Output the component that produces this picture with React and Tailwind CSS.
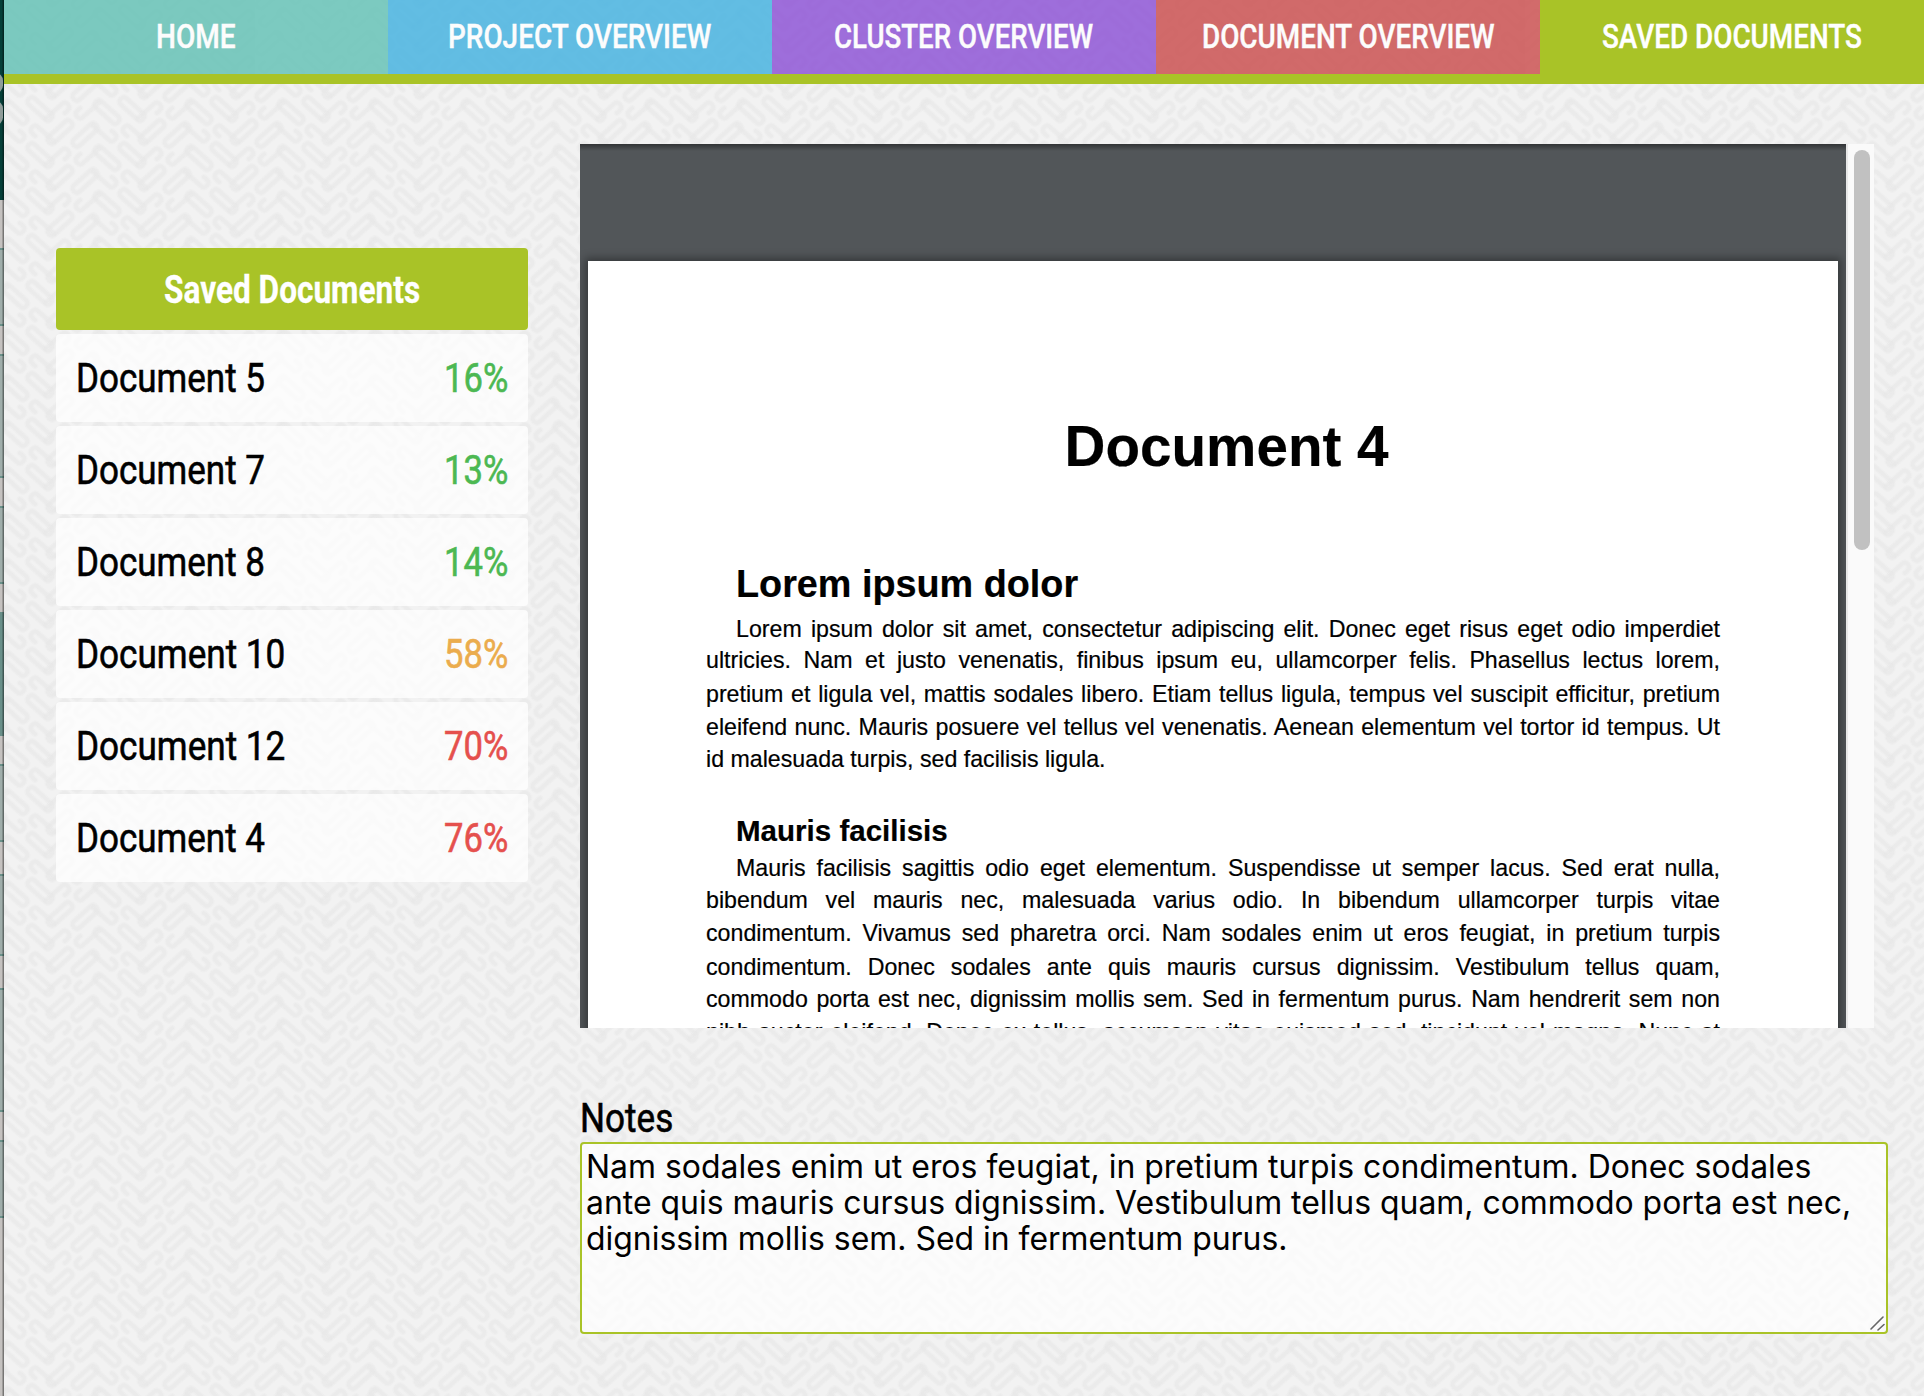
import { useLayoutEffect, useRef, useState } from "react";

// Condenses or widens a single line of text so that it takes `width` pixels.
function Fit({ width, origin = "left", className = "", children }) {
  const ref = useRef(null);
  const [scale, setScale] = useState(1);
  useLayoutEffect(() => {
    const w = ref.current.offsetWidth;
    if (w) setScale(width / w);
  }, [width]);
  const justify = origin === "center" ? "justify-center" : origin === "right" ? "justify-end" : "justify-start";
  return (
    <span className={`flex whitespace-nowrap ${justify} ${className}`} style={{ width }}>
      <span
        ref={ref}
        className="inline-block shrink-0"
        style={{ transform: `scaleX(${scale})`, transformOrigin: `${origin} center` }}
      >
        {children}
      </span>
    </span>
  );
}

const TABS = [
  { label: "HOME", width: 80, color: "bg-[#67c3b7] opacity-85" },
  { label: "PROJECT OVERVIEW", width: 263, color: "bg-[#49b4e1] opacity-85" },
  { label: "CLUSTER OVERVIEW", width: 259, color: "bg-[#9057d7] opacity-85" },
  { label: "DOCUMENT OVERVIEW", width: 293, color: "bg-[#cc5353] opacity-85" },
  { label: "SAVED DOCUMENTS", width: 260, color: "bg-[#a9c327]" },
];

const DOCS = [
  { name: "Document 5", width: 189, score: "16%", color: "text-[#4cb852]" },
  { name: "Document 7", width: 189, score: "13%", color: "text-[#4cb852]" },
  { name: "Document 8", width: 189, score: "14%", color: "text-[#4cb852]" },
  { name: "Document 10", width: 209, score: "58%", color: "text-[#ebac4d]" },
  { name: "Document 12", width: 209, score: "70%", color: "text-[#e5504d]" },
  { name: "Document 4", width: 189, score: "76%", color: "text-[#e5504d]" },
];

const INTRO = [
  ["Lorem ipsum dolor sit amet, consectetur adipiscing elit. Donec eget risus eget odio imperdiet", "h-[31px] pl-[30px]"],
  ["ultricies. Nam et justo venenatis, finibus ipsum eu, ullamcorper felis. Phasellus lectus lorem,", "h-[34px]"],
  ["pretium et ligula vel, mattis sodales libero. Etiam tellus ligula, tempus vel suscipit efficitur, pretium", "h-[33px]"],
  ["eleifend nunc. Mauris posuere vel tellus vel venenatis. Aenean elementum vel tortor id tempus. Ut", "h-8"],
];

const MAURIS = [
  ["Mauris facilisis sagittis odio eget elementum. Suspendisse ut semper lacus. Sed erat nulla,", "h-8 pl-[30px]"],
  ["bibendum vel mauris nec, malesuada varius odio. In bibendum ullamcorper turpis vitae", "h-[33px]"],
  ["condimentum. Vivamus sed pharetra orci. Nam sodales enim ut eros feugiat, in pretium turpis", "h-[34px]"],
  ["condimentum. Donec sodales ante quis mauris cursus dignissim. Vestibulum tellus quam,", "h-8"],
  ["commodo porta est nec, dignissim mollis sem. Sed in fermentum purus. Nam hendrerit sem non", "h-[33px]"],
  ["nibh auctor eleifend. Donec ex tellus, accumsan vitae euismod sed, tincidunt vel magna. Nunc at", "h-[33px]"],
];

const NOTES = [
  ["Nam sodales enim ut eros feugiat, in pretium turpis condimentum. Donec sodales", 1225],
  ["ante quis mauris cursus dignissim. Vestibulum tellus quam, commodo porta est nec,", 1265],
  ["dignissim mollis sem. Sed in fermentum purus.", 702],
];

// Slice of the window behind: [height, classes]
const EDGE = [
  [200, "bg-[#053f38]"],
  [48, "bg-[#c4c1bf]"],
  [78, "bg-[#9fadaa] border-y-2 border-[#6a918a]"],
  [28, "bg-[#c4c1bf]"],
  [124, "bg-[#9fadaa] border-y-2 border-[#6a918a]"],
  [28, "bg-[#c4c1bf]"],
  [78, "bg-[#9fadaa] border-y-2 border-[#6a918a]"],
  [28, "bg-[#c4c1bf]"],
  [124, "bg-[#698f89]"],
  [28, "bg-[#c4c1bf]"],
  [78, "bg-[#9fadaa] border-y-2 border-[#6a918a]"],
  [32, "bg-[#c4c1bf]"],
  [82, "bg-[#9fadaa] border-y-2 border-[#6a918a]"],
  [32, "bg-[#c4c1bf]"],
  [124, "bg-[#9fadaa] border-y-2 border-[#6a918a]"],
  [28, "bg-[#c4c1bf]"],
  [78, "bg-[#9fadaa] border-y-2 border-[#6a918a]"],
  [178, "bg-[#c4c1bf]"],
];

// One stripe of the weave: a closed loop followed by an open hook.
const STRIPE =
  "M-11 -4.3 H11 Q15 -4.3 15 0 Q15 4.3 11 4.3 H-11 Q-15 4.3 -15 0 Q-15 -4.3 -11 -4.3 Z M-31 -4.3 H-27 Q-23 -4.3 -23 0 Q-23 4.3 -27 4.3 H-49";

const STRIPES = [
  "translate(36 49) rotate(42)",
  "translate(11 52) rotate(42) scale(-1 -1)",
  "translate(56 26) rotate(-42) scale(-1 1)",
  "translate(81 29) rotate(-42) scale(1 -1)",
];

function Texture() {
  const tiles = [-92, 0, 92].flatMap((x) => [-92, -46, 0, 46].map((y) => [x, y]));
  return (
    <svg className="absolute inset-0 h-full w-full" aria-hidden="true">
      <defs>
        <g id="weave" fill="none" strokeLinecap="round" strokeLinejoin="round" stroke="#e6e6e6">
          {STRIPES.map((t) => (
            <g key={t} transform={t}>
              <path d={STRIPE} strokeWidth="6" strokeOpacity="0.35" />
              <path d={STRIPE} strokeWidth="3.4" strokeOpacity="0.55" />
            </g>
          ))}
        </g>
        <pattern id="cloth" width="92" height="46" patternUnits="userSpaceOnUse" patternTransform="translate(0 14)">
          {tiles.map(([x, y]) => (
            <use key={`${x},${y}`} href="#weave" x={x} y={y} />
          ))}
        </pattern>
      </defs>
      <rect width="100%" height="100%" fill="#f2f2f2" />
      <rect width="100%" height="100%" fill="url(#cloth)" />
    </svg>
  );
}

function Line({ text, className }) {
  return <div className={`leading-8 whitespace-nowrap text-justify [text-align-last:justify] ${className}`}>{text}</div>;
}

export default function App() {
  return (
    <div className="flex h-[1396px] w-[1924px] overflow-hidden font-['Roboto',sans-serif] text-black">
      <div className="relative flex w-1 shrink-0 flex-col overflow-hidden">
        {EDGE.map(([h, c], i) => (
          <div key={i} className={`w-full shrink-0 ${c}`} style={{ height: h }} />
        ))}
        <div className="absolute inset-0 bg-linear-to-r from-transparent from-40% to-black/50" />
        <div className="absolute top-[73px] -left-3 h-5 w-[15px] rounded-full bg-[#8f9c99]" />
        <div className="absolute top-[101px] -left-3 h-6 w-[15px] rounded-full bg-[#8f9c99]" />
      </div>

      <div className="relative flex-1">
        <Texture />
        <div className="relative flex h-full flex-col">
          <nav className="grid h-[74px] shrink-0 grid-cols-5">
            {TABS.map((t) => (
              <div key={t.label} className={`flex items-center justify-center pb-0.5 ${t.color}`}>
                <Fit width={t.width} origin="center" className="text-[33px] leading-none font-medium text-white [-webkit-text-stroke:0.4px]">
                  {t.label}
                </Fit>
              </div>
            ))}
          </nav>
          <div className="h-[10px] shrink-0 bg-[#a9c327]" />

          <div className="flex flex-1 items-start">
            <aside className="mt-[164px] ml-[52px] flex w-[472px] shrink-0 flex-col gap-1">
              <div className="flex h-[82px] items-center justify-center rounded-[4px] bg-[#a9c327] pt-0.5">
                <Fit width={256} origin="center" className="text-[38px] leading-none font-bold text-white [-webkit-text-stroke:0.3px]">
                  Saved Documents
                </Fit>
              </div>
              {DOCS.map((d) => (
                <div key={d.name} className="flex h-[88px] items-center justify-between rounded-[4px] bg-white/75 px-5 pt-0.5 text-[40px] leading-none [-webkit-text-stroke:0.6px]">
                  <Fit width={d.width}>{d.name}</Fit>
                  <Fit width={64} origin="right" className={d.color}>
                    {d.score}
                  </Fit>
                </div>
              ))}
            </aside>

            <main className="mt-[60px] ml-[52px] flex w-[1308px] flex-col">
              <div className="flex h-[884px] w-[1294px]">
                <div className="relative h-full w-[1266px] overflow-hidden bg-[#525659] px-2 pt-[117px] font-['Liberation_Sans',Arial,sans-serif]">
                  <div className="absolute inset-x-0 top-0 h-[7px] bg-linear-to-b from-black/40 to-transparent" />
                  <article className="h-[900px] bg-white px-[118px] text-[23.2px] shadow-[0_0_8px_3px_rgba(0,0,0,0.35)] [-webkit-text-stroke:0.2px]">
                    <h1 className="flex justify-center pt-[153px] pl-[27px] text-[57.5px] leading-[64px] font-bold">
                      <Fit width={324} origin="center">Document 4</Fit>
                    </h1>
                    <h2 className="mt-[84px] pl-[30px] text-[38px] leading-[44px] font-bold">
                      <Fit width={342}>Lorem ipsum dolor</Fit>
                    </h2>
                    <div className="mt-[7px]">
                      {INTRO.map(([t, c]) => (
                        <Line key={t} text={t} className={c} />
                      ))}
                      <div className="h-8 leading-8">
                        <Fit width={400}>id malesuada turpis, sed facilisis ligula.</Fit>
                      </div>
                    </div>
                    <h3 className="mt-[38px] h-[39px] pl-[30px] text-[29.4px] leading-[36px] font-bold">
                      <Fit width={212}>Mauris facilisis</Fit>
                    </h3>
                    <div>
                      {MAURIS.map(([t, c]) => (
                        <Line key={t} text={t} className={c} />
                      ))}
                    </div>
                  </article>
                </div>
                <div className="flex w-7 justify-end border-x-2 border-l-[#e8e8e8] border-r-[#fafafa] bg-[#fafafa] pt-[6px] pr-[2px]">
                  <div className="h-[400px] w-4 rounded-full bg-[#c1c1c1]" />
                </div>
              </div>

              <label className="mt-[67px] h-[47px] text-[40px] leading-[48px] [-webkit-text-stroke:0.6px]">
                <Fit width={93}>Notes</Fit>
              </label>
              <div className="relative h-[192px] rounded-[4px] border-2 border-[#a9c327] bg-white/75 px-1 pt-[5px] font-['Inter',sans-serif] text-[32px] leading-[36px]">
                {NOTES.map(([t, w]) => (
                  <Fit key={t} width={w}>
                    {t}
                  </Fit>
                ))}
                <svg className="absolute right-[1px] bottom-[1px] h-4 w-4" viewBox="0 0 16 16" stroke="#666" strokeWidth="1.6" strokeLinecap="round">
                  <path d="M2 14 L14 2 M9 15 L15 9.5" />
                </svg>
              </div>
            </main>
          </div>
        </div>
      </div>
    </div>
  );
}
